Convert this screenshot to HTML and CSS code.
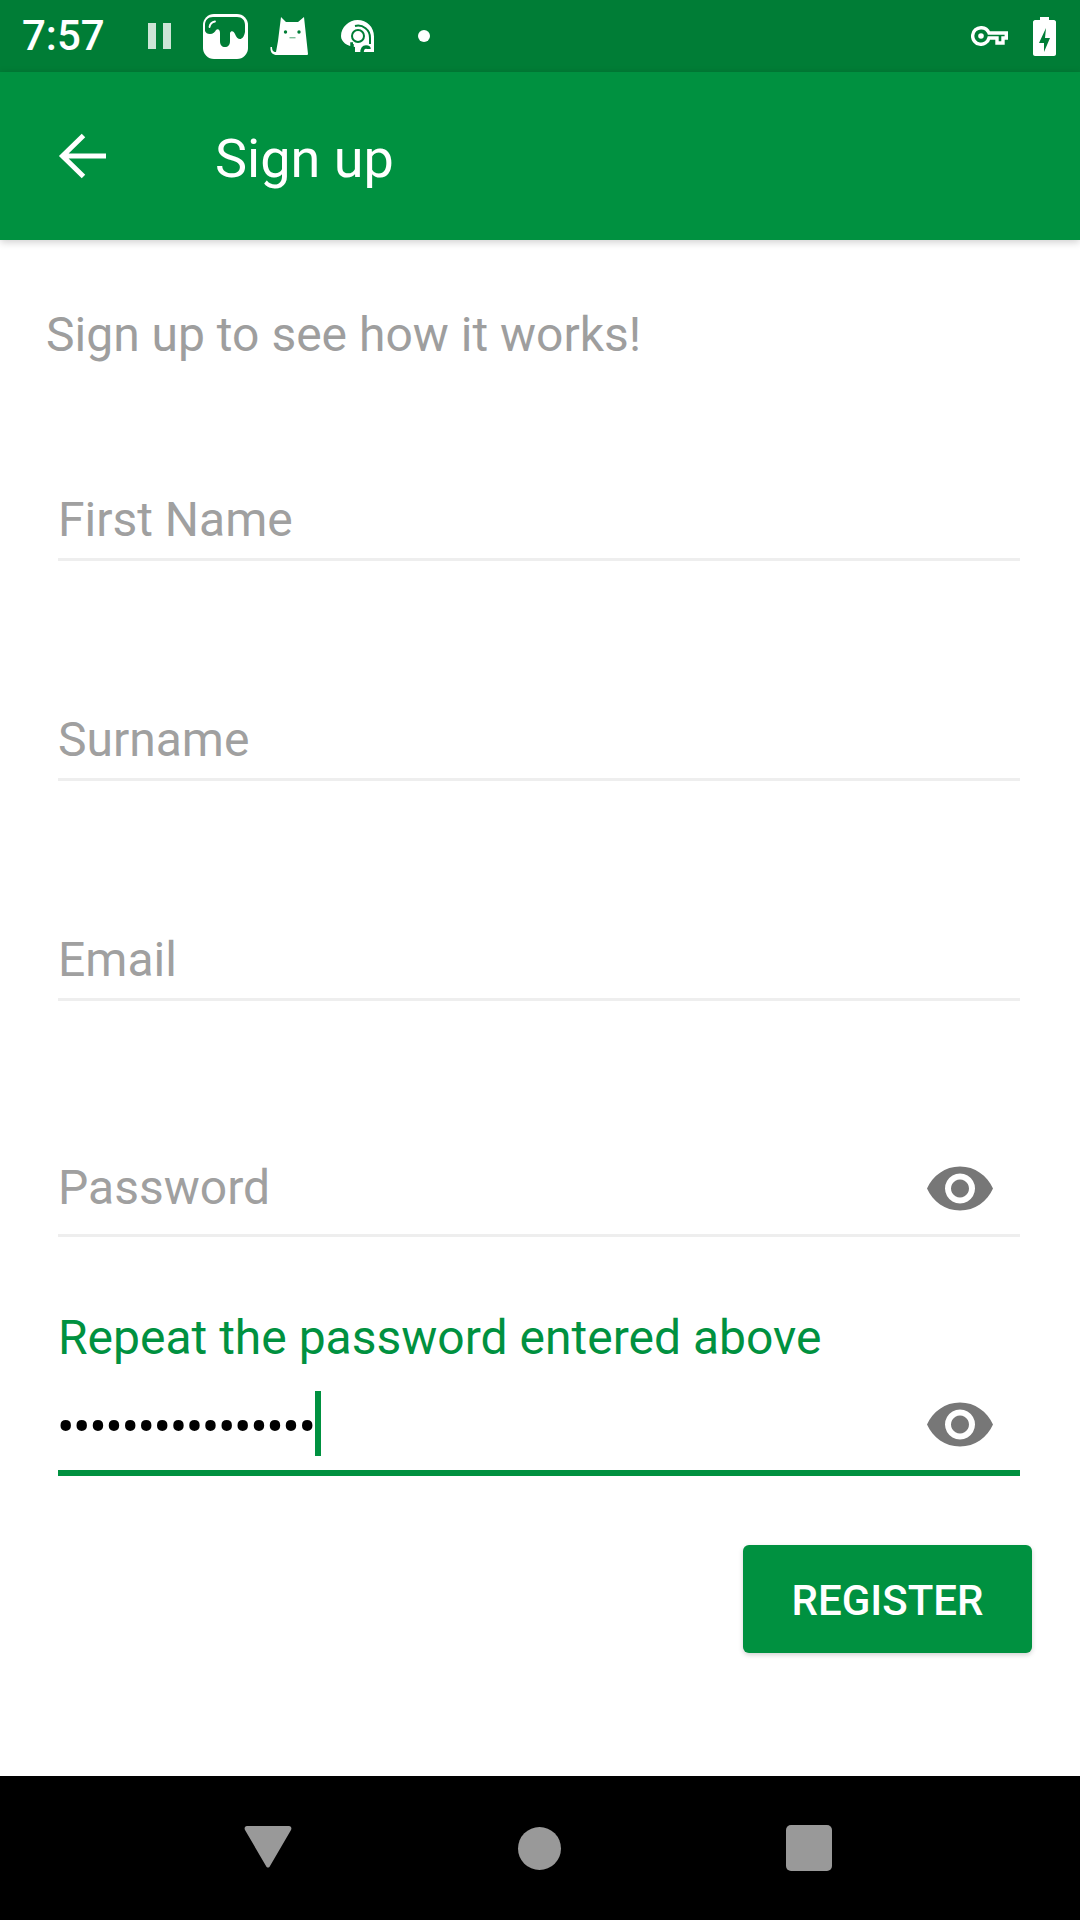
FILE: index.html
```html
<!DOCTYPE html>
<html lang="en">
<head>
<meta charset="utf-8">
<title>Sign up</title>
<link rel="stylesheet" href="styles.css">
</head>
<body>
<div class="screen">
  <div class="statusbar">
    <span class="time">7:57</span>
    <svg class="ic-pause" viewBox="0 0 23 26"><rect width="8" height="26" fill="#fff" opacity=".8"/><rect x="15" width="8" height="26" fill="#fff" opacity=".8"/></svg>
    <svg class="ic-tub" viewBox="0 0 45 45"><rect width="45" height="45" rx="11" fill="#fff"/><path fill="#007d36" d="M42 11v7c-1 5-3 7-5 7s-4-2-5-5c-1-3-4-4-5-1v8c0 4-2 6-5 6s-5-2-5-6v-8c0-3-2-5-4-3-1 2-3 4-6 4s-4-1-5-3V11c0-5 3-8 8-8h24c5 0 8 3 8 8z"/><path fill="none" stroke="#fff" stroke-width="1.800" stroke-linecap="round" d="M6.500 13c.5-3 2.500-5 5.500-5.500"/></svg>
    <svg class="ic-cat" viewBox="0 0 39 38"><path fill="#fff" d="M11 0l5 5h12l6-5 4 37q0 1-1 1H7C3 38 0 36 .5 30H2c0 3 1 5 4 5l2-11z"/><circle cx="15.500" cy="15" r="1.700" fill="#007d36"/><circle cx="29" cy="15" r="1.700" fill="#007d36"/><rect x="19.500" y="20" width="6" height="1.400" fill="#7fbe9a"/></svg>
    <svg class="ic-addict" viewBox="0 0 33 33"><path fill="#fff" d="M16.500 0C26 0 33 7 33 16.500V32H14v-5C6 26 0 22 0 16 0 7 8 0 16.500 0z"/><g fill="none" stroke="#007d36"><path stroke-width="2" d="M14 6a12 12 0 0 1 15 12v6"/><circle cx="17" cy="16" r="6" stroke-width="2"/><path stroke-width="3.500" d="M11 33v-9h1M21 33c0-5 2-6 4-6s3 1 3 2"/></g><circle cx="17" cy="16" r="2" fill="#fff"/></svg>
    <span class="dot"></span>
    <span class="spacer"></span>
    <svg class="ic-key" viewBox="0 0 37 20"><path fill="none" stroke="#fff" stroke-width="3.400" d="M10 1.700a8.300 8.300 0 0 1 8 5.300h17.300v5H32v5h-6v-5h-8a8.300 8.300 0 1 1-8-10.300z"/><circle cx="10" cy="10" r="2.800" fill="#fff"/></svg>
    <svg class="ic-batt" viewBox="0 0 23 39"><path fill="#fff" d="M7 0h9v3h5c1 0 2 1 2 2v32c0 1-1 2-2 2H2c-1 0-2-1-2-2V5c0-1 1-2 2-2h5z"/><path fill="#007d36" d="M13 11l-7 15h5v9l6-14h-5z"/></svg>
  </div>

  <header class="appbar">
    <svg class="ic-back" viewBox="0 0 48 48"><path fill="none" stroke="#fff" stroke-width="5" d="M48 24H5M25.500 3.500L4.500 24l21 20.500"/></svg>
    <span class="title">Sign up</span>
  </header>

  <main class="content">
    <p class="intro">Sign up to see how it works!</p>
    <div class="field field-first"><span class="hint">First Name</span></div>
    <div class="field"><span class="hint">Surname</span></div>
    <div class="field"><span class="hint">Email</span></div>
    <div class="field field-pass">
      <span class="hint">Password</span>
      <svg class="ic-eye" viewBox="0 0 66 44"><path fill="#777" fill-rule="evenodd" d="M33 0c15 0 27 9 33 22-6 13-18 22-33 22S6 35 0 22C6 9 18 0 33 0zm0 7a15 15 0 1 0 .01 0zm0 6a9 9 0 1 1-.01 0z"/></svg>
    </div>
    <label class="label">Repeat the password entered above</label>
    <div class="field field-active">
      <span class="dots">••••••••••••••••</span><span class="caret"></span>
      <svg class="ic-eye" viewBox="0 0 66 44"><path fill="#777" fill-rule="evenodd" d="M33 0c15 0 27 9 33 22-6 13-18 22-33 22S6 35 0 22C6 9 18 0 33 0zm0 7a15 15 0 1 0 .01 0zm0 6a9 9 0 1 1-.01 0z"/></svg>
    </div>
    <div class="actions"><button class="register">REGISTER</button></div>
  </main>

  <nav class="navbar">
    <svg class="nav-back" viewBox="0 0 48 42"><path fill="#999" d="M3 0h42c2 0 3 2 2 4L26 40c-1 2-3 2-4 0L1 4C0 2 1 0 3 0z"/></svg>
    <span class="nav-home"></span>
    <span class="nav-recent"></span>
  </nav>
</div>
</body>
</html>
```
FILE: styles.css
```css
* { box-sizing: border-box; }
html, body { margin: 0; padding: 0; }
body { width: 1080px; height: 1920px; background: #fff; font-family: Roboto, "Liberation Sans", sans-serif; overflow: hidden; }
.screen { width: 1080px; height: 1920px; display: flex; flex-direction: column; }

.statusbar { height: 72px; flex: none; background: #007d36; display: flex; align-items: center; padding: 0 24px 0 22px; color: #fff; }
.time { font-size: 42px; font-weight: 500; line-height: 72px; width: 126px; flex: none; }
.statusbar svg { display: block; flex: none; }
.ic-pause { width: 23px; height: 26px; }
.ic-tub { width: 45px; height: 45px; margin-left: 32px; }
.ic-cat { width: 39px; height: 38px; margin-left: 22px; }
.ic-addict { width: 33px; height: 33px; margin-left: 32px; }
.dot { width: 12px; height: 12px; border-radius: 50%; background: #fff; margin-left: 44px; flex: none; }
.spacer { flex: 1; }
.ic-key { width: 37px; height: 20px; }
.ic-batt { width: 23px; height: 39px; margin-left: 25px; }

.appbar { height: 168px; flex: none; background: #009140; display: flex; align-items: center; padding-left: 58px; color: #fff; box-shadow: 0 2px 8px rgba(0,0,0,.2); position: relative; }
.ic-back { width: 48px; height: 48px; flex: none; }
.title { font-size: 54px; margin-left: 109px; margin-top: 5px; line-height: 163px; }

.content { flex: 1; padding: 0 60px 0 58px; display: flex; flex-direction: column; }
.intro { margin: 0 0 0 -12px; padding-top: 66px; font-size: 48px; line-height: 58px; color: #9e9e9e; }
.field { height: 220px; border-bottom: 3px solid #eeeeee; display: flex; align-items: flex-end; position: relative; }
.field-first { height: 197px; }
.field-pass { height: 236px; }
.hint { font-size: 48px; line-height: 60px; color: #a0a0a0; padding-bottom: 8px; }
.field-pass .hint { padding-bottom: 16px; }
.ic-eye { width: 66px; height: 45px; position: absolute; right: 27px; bottom: 23px; }
.label { font-size: 48px; line-height: 60px; color: #009140; margin-top: 71px; }
.field-active { height: 85px; border-bottom: 6px solid #009140; margin-top: 23px; align-items: flex-start; }
.dots { font-size: 52px; line-height: 66px; color: #000; letter-spacing: -1.45px; margin-top: 4px; margin-left: -1px; }
.caret { width: 6px; height: 65px; background: #009140; }
.field-active .ic-eye { bottom: 23px; }
.actions { display: flex; justify-content: flex-end; margin-top: 69px; margin-right: -12px; }
.register { width: 289px; height: 108px; border: 0; border-radius: 6px; background: #009140; color: #fff; font-family: inherit; font-size: 42px; font-weight: 500; box-shadow: 0 2px 5px rgba(0,0,0,.18); padding: 2px 0 0; }

.navbar { height: 144px; flex: none; background: #000; display: flex; align-items: center; }
.nav-back { width: 48px; height: 42px; margin-left: 244px; margin-top: -2px; flex: none; }
.nav-home { width: 43px; height: 43px; border-radius: 50%; background: #999; margin-left: 226px; flex: none; }
.nav-recent { width: 46px; height: 46px; border-radius: 5px; background: #999; margin-left: 225px; flex: none; }
```
